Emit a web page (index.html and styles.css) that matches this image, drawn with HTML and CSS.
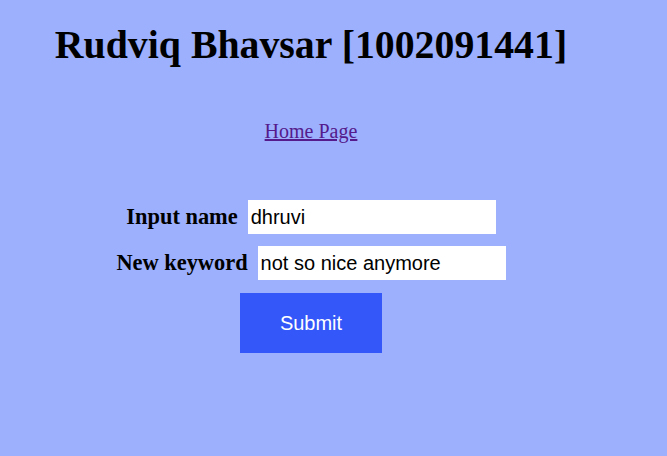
FILE: index.html
```html
<!DOCTYPE html>
<html>
<head>
<meta charset="utf-8">
<title>Rudviq Bhavsar</title>
<link rel="stylesheet" href="styles.css">
</head>
<body>
<main class="page">
  <h1 class="title">Rudviq Bhavsar [1002091441]</h1>
  <a class="home-link" href="#">Home Page</a>
  <form class="form">
    <div class="row">
      <label class="label" for="name">Input name</label>
      <input class="field" id="name" type="text" value="dhruvi">
    </div>
    <div class="row">
      <label class="label" for="kw">New keyword</label>
      <input class="field" id="kw" type="text" value="not so nice anymore">
    </div>
    <button class="submit" type="button">Submit</button>
  </form>
</main>
</body>
</html>
```

FILE: styles.css
```css
html, body {
  margin: 0;
  padding: 0;
}
body {
  background: #9cb0fe;
  font-family: "Liberation Serif", "Times New Roman", serif;
  color: #000;
}
.page {
  width: 606px;
  margin-left: 8px;
  display: flex;
  flex-direction: column;
  align-items: center;
  padding-top: 22px;
}
.title {
  margin: 0;
  font-size: 39.8px;
  font-weight: bold;
  line-height: 46px;
}
.home-link {
  margin-top: 52px;
  font-size: 20px;
  line-height: 23px;
  color: #551a8b;
}
.form {
  margin-top: 57px;
  display: flex;
  flex-direction: column;
  align-items: center;
  gap: 12px;
}
.row {
  display: flex;
  align-items: center;
  gap: 10px;
}
.label {
  font-size: 22.4px;
  font-weight: bold;
}
.field {
  width: 248px;
  height: 34px;
  box-sizing: border-box;
  border: none;
  padding: 0 3px;
  margin: 0;
  background: #fff;
  font-family: "Liberation Sans", Arial, sans-serif;
  font-size: 20px;
  color: #000;
  outline: none;
}
.submit {
  margin-top: 1px;
  width: 142px;
  height: 60px;
  border: none;
  background: #3357f8;
  color: #fff;
  font-family: "Liberation Sans", Arial, sans-serif;
  font-size: 20px;
  cursor: pointer;
}
```
